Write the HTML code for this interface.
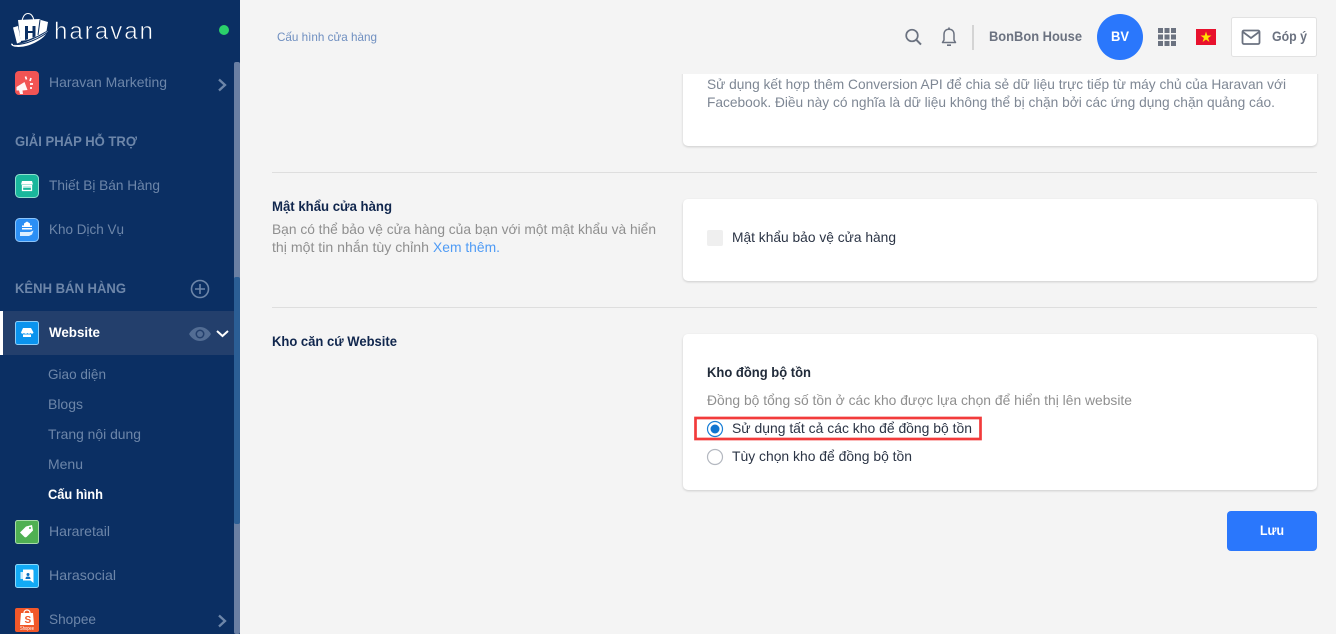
<!DOCTYPE html>
<html lang="vi">
<head>
<meta charset="utf-8">
<title>Haravan</title>
<style>
html,body{margin:0;padding:0;width:1336px;height:634px;overflow:hidden;background:#f4f4f4}
svg{display:block;position:absolute;left:0;top:0}
text{font-family:"Liberation Sans","DejaVu Sans",sans-serif;font-size:14px}
.n{fill:#6d86a9}
.h{fill:#6d86a9;font-weight:700}
.b{fill:#ffffff;font-weight:700}
.g{fill:#8f8f8f}
.d{fill:#10264d;font-weight:700}
.t{fill:#2b3445}
.c{fill:#fff;filter:drop-shadow(0 1px 1px rgba(0,0,0,.16))}
</style>
</head>
<body>
<svg width="1336" height="634" viewBox="0 0 1336 634" xmlns="http://www.w3.org/2000/svg">
<rect width="1336" height="634" fill="#f4f4f4"/>

<!-- Content cards -->
<rect class="c" x="683" y="60" width="634" height="86" rx="5"/>
<rect class="c" x="683" y="199" width="634" height="82" rx="5"/>
<rect class="c" x="683" y="334" width="634" height="156" rx="5"/>
<rect x="272" y="172" width="1045" height="1" fill="#dedede"/>
<rect x="272" y="307" width="1045" height="1" fill="#dedede"/>

<!-- Top bar -->
<rect x="240" y="0" width="1096" height="74" fill="#f4f4f4"/>
<text x="277" y="41" style="font-size:12px" fill="#6f8fc0" textLength="100" lengthAdjust="spacingAndGlyphs">Cấu hình cửa hàng</text>

<circle cx="912" cy="35.500" r="5.800" fill="none" stroke="#6b7280" stroke-width="1.700"/>
<path d="M916.200 39.700l4.800 4.900" stroke="#6b7280" stroke-width="2" fill="none"/>
<path d="M942.500 42.500h13l-1.500-2.500v-5.500c0-3.200-1.900-5.200-5-5.200s-5 2-5 5.200v5.500z" fill="none" stroke="#6b7280" stroke-width="1.500" stroke-linejoin="round"/>
<path d="M949 27.500v2M947 45.200h4" stroke="#6b7280" stroke-width="1.700"/>
<rect x="972" y="25" width="2" height="25" fill="#d4d4d4"/>
<text x="989" y="41" style="fill:#6b7280;font-weight:700" textLength="93" lengthAdjust="spacingAndGlyphs">BonBon House</text>
<circle cx="1120" cy="37" r="23" fill="#2a77fc"/>
<text x="1111" y="41" class="b" textLength="18" lengthAdjust="spacingAndGlyphs">BV</text>
<g fill="#6b7280">
<rect x="1158" y="28" width="5" height="5"/><rect x="1164.500" y="28" width="5" height="5"/><rect x="1171" y="28" width="5" height="5"/>
<rect x="1158" y="34.500" width="5" height="5"/><rect x="1164.500" y="34.500" width="5" height="5"/><rect x="1171" y="34.500" width="5" height="5"/>
<rect x="1158" y="41" width="5" height="5"/><rect x="1164.500" y="41" width="5" height="5"/><rect x="1171" y="41" width="5" height="5"/>
</g>
<rect x="1196" y="29" width="20" height="16" fill="#e8112d"/>
<path d="M1206 31.500l1.300 4h4.200l-3.400 2.500 1.300 4-3.400-2.500-3.400 2.500 1.300-4-3.400-2.500h4.200z" fill="#ffe100"/>
<rect x="1231.500" y="17.500" width="85" height="39" rx="2" fill="#fff" stroke="#e2e2e2"/>
<rect x="1242.500" y="30.500" width="17" height="13.500" rx="1.500" fill="none" stroke="#6b7280" stroke-width="1.800"/>
<path d="M1243 32l8 6 8-6" fill="none" stroke="#6b7280" stroke-width="1.800"/>
<text x="1272" y="41" style="fill:#6b7280;font-weight:700" textLength="35" lengthAdjust="spacingAndGlyphs">Góp ý</text>

<!-- Card text -->
<text x="707" y="89" fill="#7e8794" textLength="579" lengthAdjust="spacingAndGlyphs">Sử dụng kết hợp thêm Conversion API để chia sẻ dữ liệu trực tiếp từ máy chủ của Haravan với</text>
<text x="707" y="107" fill="#7e8794" textLength="568" lengthAdjust="spacingAndGlyphs">Facebook. Điều này có nghĩa là dữ liệu không thể bị chặn bởi các ứng dụng chặn quảng cáo.</text>

<text x="272" y="211" class="d" textLength="120" lengthAdjust="spacingAndGlyphs">Mật khẩu cửa hàng</text>
<text x="272" y="234" class="g" textLength="384" lengthAdjust="spacingAndGlyphs">Bạn có thể bảo vệ cửa hàng của bạn với một mật khẩu và hiển</text>
<text x="272" y="252" class="g" textLength="157" lengthAdjust="spacingAndGlyphs">thị một tin nhắn tùy chỉnh</text>
<text x="433" y="252" fill="#4f9bf5" textLength="67" lengthAdjust="spacingAndGlyphs">Xem thêm.</text>

<rect x="707" y="230" width="16" height="16" rx="2" fill="#efefef"/>
<text x="732" y="242" class="t" textLength="164" lengthAdjust="spacingAndGlyphs">Mật khẩu bảo vệ cửa hàng</text>

<text x="272" y="346" class="d" textLength="125" lengthAdjust="spacingAndGlyphs">Kho căn cứ Website</text>

<text x="707" y="377" style="fill:#212b3a;font-weight:700" textLength="104" lengthAdjust="spacingAndGlyphs">Kho đồng bộ tồn</text>
<text x="707" y="405" class="g" textLength="425" lengthAdjust="spacingAndGlyphs">Đồng bộ tổng số tồn ở các kho được lựa chọn để hiển thị lên website</text>

<rect x="695.500" y="418" width="285" height="21" fill="none" stroke="#f23b3b" stroke-width="2.700"/>
<circle cx="715" cy="429" r="7.500" fill="#fff" stroke="#1a7fd6" stroke-width="1.200"/>
<circle cx="715" cy="429" r="4.500" fill="#0f74d0"/>
<text x="732" y="433" class="t" textLength="240" lengthAdjust="spacingAndGlyphs">Sử dụng tất cả các kho để đồng bộ tồn</text>
<circle cx="715" cy="457" r="7.500" fill="#fff" stroke="#b4b8c0" stroke-width="1.200"/>
<text x="732" y="461" class="t" textLength="180" lengthAdjust="spacingAndGlyphs">Tùy chọn kho để đồng bộ tồn</text>

<rect x="1227" y="511" width="90" height="40" rx="4" fill="#2a77fc"/>
<text x="1260" y="535" class="b" textLength="24" lengthAdjust="spacingAndGlyphs">Lưu</text>

<!-- Sidebar -->
<rect x="0" y="0" width="240" height="634" fill="#0b2f63"/>
<rect x="234" y="62" width="6" height="572" rx="2" fill="#6a7fa3"/>
<rect x="234" y="277" width="6" height="247" rx="2" fill="#2b5e95"/>
<rect x="0" y="311" width="234" height="44" fill="#233f6c"/>
<rect x="0" y="311" width="3" height="44" fill="#fff"/>

<!-- Logo -->
<path d="M22 21c1-5 3-7.500 6-7.500s5 2.500 6 7" fill="none" stroke="#fff" stroke-width="1.100"/>
<g fill="#fff">
<path d="M13 27.500l5-1.500 3 16-4 1.500z"/>
<path d="M18 20l21-1 2 1 7 2-1.500 9-9 5-10 4-7 1z"/>
<path d="M11 43.500c5 1.500 12 0 19-3 7-3 13-6 18-9.500-3 6-9 10-16 13-7 3-14 3.500-18 2.500-2-.5-3-1.500-3-3z"/>
</g>
<path d="M40 20l-2 15" stroke="#0b2f63" stroke-width="1"/>
<path d="M13 44.500c6 .5 13-1 20-4 6-2.500 11-5.500 15-8.500" fill="none" stroke="#0b2f63" stroke-width="1"/>
<path d="M25 26h3v5h4.500v-5h3v10.500l-3 1.200v-4.700h-4.500v6.200l-3 .8z" fill="#0b2f63"/>
<text x="54" y="39" style="font-size:24px;fill:#fff;stroke:#0b2f63;stroke-width:.55px" textLength="99" lengthAdjust="spacing">haravan</text>
<circle cx="224" cy="30" r="5" fill="#2bd16a"/>

<!-- Marketing -->
<rect x="15" y="71" width="24" height="24" rx="4" fill="#f25454"/>
<path d="M16.500 87l8-5 3 8-5 .5 .5 3.500h-3l-1-3.500-2.500 0z" fill="#fff" opacity=".95"/>
<path d="M25.500 76.500l1 3M31 78l-1 3M33 84h-3M32 88h-2" stroke="#fff" stroke-width="1.700"/>
<text x="49" y="87" class="n" textLength="118" lengthAdjust="spacingAndGlyphs">Haravan Marketing</text>
<path d="M219 79.500l6 5.500-6 5.500" fill="none" stroke="#6d86a9" stroke-width="2.300"/>

<text x="15" y="146" class="h" textLength="122" lengthAdjust="spacingAndGlyphs">GIẢI PHÁP HỖ TRỢ</text>

<rect x="15.500" y="174.500" width="23" height="23" rx="4" fill="#19b79c" stroke="#8ee0cf"/>
<path d="M22 181h10l1 3.500h-12z" fill="#fff"/>
<path d="M22.500 185.500h9v5h-9z" fill="none" stroke="#fff" stroke-width="1.300"/>
<path d="M23 187h8" stroke="#fff" stroke-width="1.300"/>
<text x="49" y="190" class="n" textLength="111" lengthAdjust="spacingAndGlyphs">Thiết Bị Bán Hàng</text>

<rect x="15.500" y="218.500" width="23" height="23" rx="4" fill="#2b8ff5" stroke="#8cc4fa"/>
<path d="M24 223.500l3-2 3 2v2h2v4h-10v-4h2z" fill="#fff"/>
<path d="M22 227.500h10" stroke="#2b8ff5"/>
<path d="M20 232h10l3.500-1.500-1.500 4-3 1.500h-9z" fill="#dceeff"/>
<text x="49" y="234" class="n" textLength="75" lengthAdjust="spacingAndGlyphs">Kho Dịch Vụ</text>

<text x="15" y="293" class="h" textLength="111" lengthAdjust="spacingAndGlyphs">KÊNH BÁN HÀNG</text>
<circle cx="200" cy="289" r="8.500" fill="none" stroke="#6d86a9" stroke-width="1.600"/>
<path d="M200 284v10M195 289h10" stroke="#6d86a9" stroke-width="1.600"/>

<!-- Website -->
<rect x="15.500" y="321.500" width="23" height="23" rx="2" fill="#0a93ee" stroke="#8ccdf8"/>
<path d="M23 328h8l2.500 4.500c-.5 1.500-2 1.500-3 .5-1 1-2 1-3 0-1 1-2.500 1-3.500 0-1 1-2.500 1-3-.5z" fill="#fff"/>
<rect x="23" y="334.500" width="8" height="2.500" fill="#fff"/>
<text x="49" y="337" class="b" textLength="51" lengthAdjust="spacingAndGlyphs">Website</text>
<path d="M189 334c3-5 7-7 11-7s8 2 11 7c-3 5-7 7-11 7s-8-2-11-7z" fill="#536d94"/>
<circle cx="200" cy="334" r="4.500" fill="#233f6c"/>
<circle cx="200" cy="334" r="3" fill="#536d94"/>
<path d="M217 331l5.500 5 5.500-5" fill="none" stroke="#fff" stroke-width="2"/>

<text x="48" y="379" class="n" textLength="58" lengthAdjust="spacingAndGlyphs">Giao diện</text>
<text x="48" y="409" class="n" textLength="35" lengthAdjust="spacingAndGlyphs">Blogs</text>
<text x="48" y="439" class="n" textLength="93" lengthAdjust="spacingAndGlyphs">Trang nội dung</text>
<text x="48" y="469" class="n" textLength="35" lengthAdjust="spacingAndGlyphs">Menu</text>
<text x="48" y="499" class="b" textLength="55" lengthAdjust="spacingAndGlyphs">Cấu hình</text>

<rect x="15.500" y="520.500" width="23" height="23" rx="2" fill="#4fb052" stroke="#a6dba8"/>
<path d="M20 532.500l6-6 6-1.500 1 5.500-6.500 6.500c-.8.500-1.500.500-2 0z" fill="#fff"/>
<circle cx="30" cy="528" r="1" fill="#4fb052"/>
<text x="49" y="536" class="n" textLength="61" lengthAdjust="spacingAndGlyphs">Hararetail</text>

<rect x="15.500" y="564.500" width="23" height="23" rx="2" fill="#12aaf5" stroke="#8cd8fb"/>
<path d="M23 569.500h9c1 0 1.500.500 1.500 1.500v12l-3-2.500h-7.500z" fill="#fff"/>
<path d="M20.500 572h2.500v7h-2.500z" fill="#cdeeff"/>
<circle cx="28" cy="574.500" r="1.500" fill="#0a6fc0"/>
<path d="M25.500 579c0-2 1-2.500 2.500-2.500s2.500.5 2.500 2.500z" fill="#0a6fc0"/>
<text x="49" y="580" class="n" textLength="67" lengthAdjust="spacingAndGlyphs">Harasocial</text>

<rect x="15" y="608" width="24" height="24" rx="2" fill="#f1582a"/>
<path d="M21 613h12l1 12h-14z" fill="#fff"/>
<path d="M24 613c0-4 6-4 6 0" fill="none" stroke="#fff" stroke-width="1.200"/>
<text x="24.500" y="623" style="font-size:10px;fill:#f1582a;font-weight:700">S</text>
<text x="20" y="630" style="font-size:5px;fill:#fff" textLength="14" lengthAdjust="spacingAndGlyphs">Shopee</text>
<text x="49" y="624" class="n" textLength="47" lengthAdjust="spacingAndGlyphs">Shopee</text>
<path d="M219 615.500l6 5.500-6 5.500" fill="none" stroke="#6d86a9" stroke-width="2.300"/>
</svg>
</body>
</html>
